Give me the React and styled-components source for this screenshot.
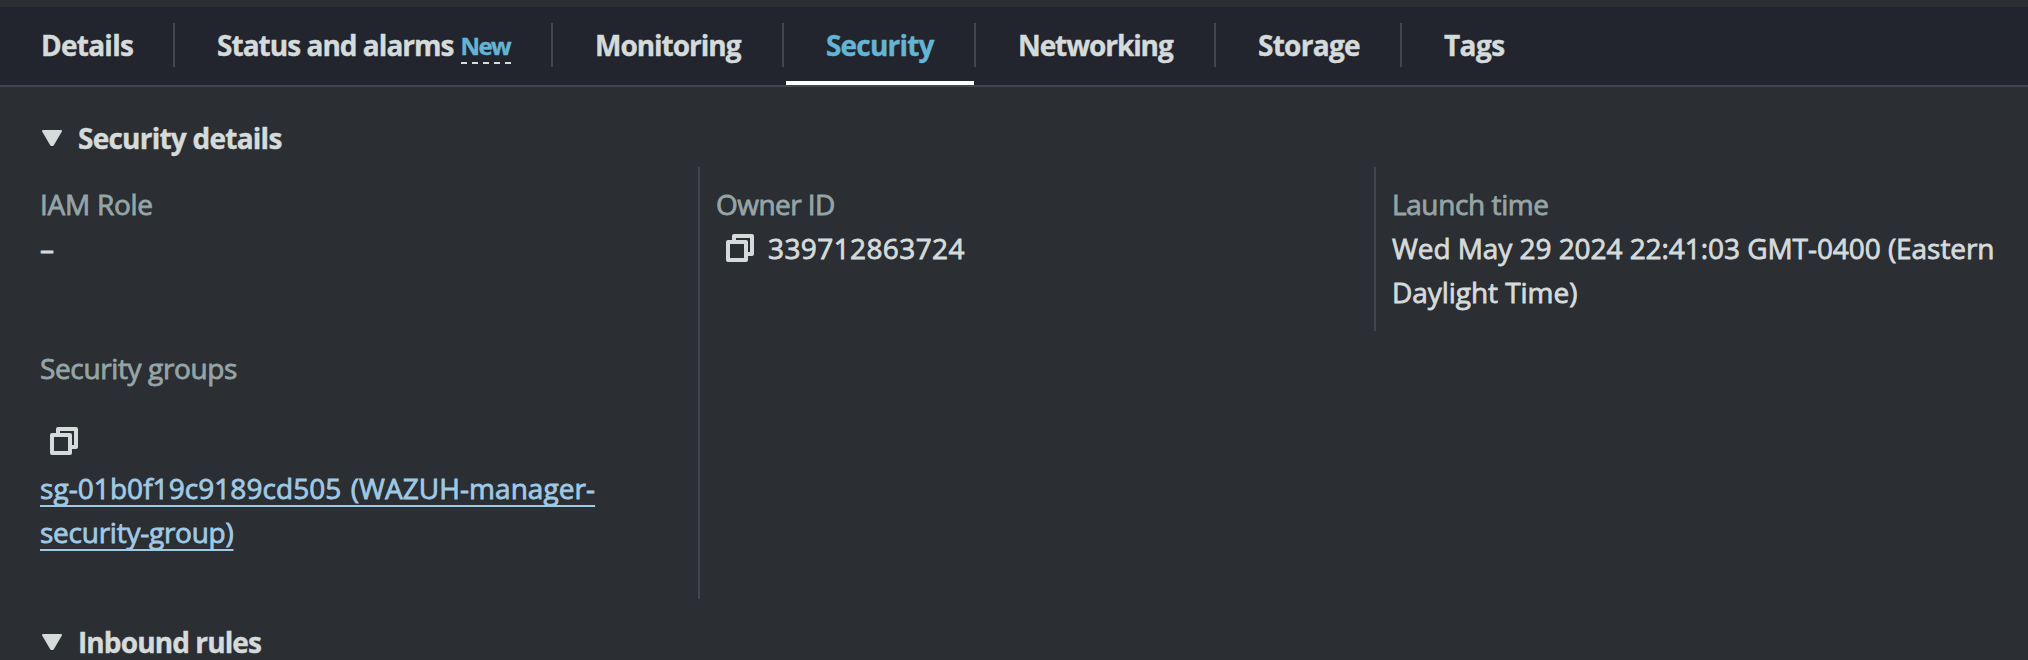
import React from "react";
import styled, { createGlobalStyle } from "styled-components";

const colors = {
  page: "#2b2e33",
  bar: "#22252d",
  line: "#43454f",
  text: "#d5dbdb",
  label: "#95a5a6",
  accent: "#64b4d6",
  link: "#a0c9e4",
};

const GlobalStyle = createGlobalStyle`
  * { box-sizing: border-box; }
  body {
    margin: 0;
    background: ${colors.page};
    color: ${colors.text};
    font: 400 28px/44px "Open Sans", "Noto Sans", sans-serif;
    overflow: hidden;
  }
`;

const Page = styled.div`
  height: 660px;
  padding-top: 7px;
  overflow: hidden;
`;

const TabBar = styled.nav`
  display: flex;
  height: 80px;
  background: ${colors.bar};
  border-bottom: 2px solid ${colors.line};
`;

const TabItem = styled.div`
  display: flex;
  width: ${(p) => p.$width}px;
  height: 78px;
`;

const Tab = styled.a`
  flex: 1;
  display: flex;
  height: 78px;
  padding: 16px 0 0 ${(p) => p.$inset}px;
  border-bottom: 4px solid ${(p) => (p.$active ? "#ffffff" : "transparent")};
  color: ${(p) => (p.$active ? colors.accent : colors.text)};
  font-weight: 700;
  letter-spacing: ${(p) => p.$spacing}px;
  white-space: nowrap;
  -webkit-text-stroke: 0.4px currentColor;
`;

const Divider = styled.span`
  width: 2px;
  height: 44px;
  margin: 16px ${(p) => p.$after || 0}px 0 0;
  background: ${colors.line};
`;

const NewBadge = styled.span`
  width: 50px;
  height: 41px;
  margin-left: 7px;
  color: ${colors.accent};
  font-size: 24px;
  line-height: 46px;
  letter-spacing: -1.6px;
  border-bottom: 2px dashed ${colors.text};
`;

const SectionHeader = styled.h2`
  display: flex;
  align-items: center;
  gap: 16px;
  height: 44px;
  margin: ${(p) => p.$top}px 0 0 42px;
  font-size: 28px;
  line-height: 44px;
  font-weight: 700;
  letter-spacing: ${(p) => p.$spacing}px;
  -webkit-text-stroke: 0.4px currentColor;
`;

const Columns = styled.div`
  display: grid;
  grid-template-columns: 658px 676px 1fr;
  height: 432px;
  margin: 7px 0 0 40px;
`;

const Column = styled.div`
  padding: 15px 0 ${(p) => (p.$compact ? 17 : 0)}px ${(p) => (p.$ruled ? 16 : 0)}px;
  border-left: ${(p) => (p.$ruled ? `2px solid ${colors.line}` : "none")};
  align-self: ${(p) => (p.$compact ? "start" : "stretch")};
  -webkit-text-stroke: 0.8px currentColor;
`;

const Field = styled.div`
  margin-bottom: ${(p) => p.$gap || 0}px;
`;

const Label = styled.div`
  color: ${colors.label};
  letter-spacing: ${(p) => p.$spacing}px;
`;

const Value = styled.div`
  letter-spacing: ${(p) => p.$spacing || 0}px;
  white-space: nowrap;
`;

const CopyValue = styled.div`
  display: flex;
  align-items: center;
  gap: 14px;
  padding-left: 10px;
`;

const CopyRow = styled.div`
  height: 76px;
  padding: 37px 0 0 10px;
  line-height: 0;
`;

const GroupLink = styled.a`
  display: flex;
  flex-direction: column;
  align-items: flex-start;
  color: ${colors.link};
`;

const LinkLine = styled.span`
  letter-spacing: ${(p) => p.$spacing}px;
  word-spacing: ${(p) => p.$wordGap || 0}px;
  white-space: nowrap;
  text-decoration: underline 2px;
  text-underline-offset: 6px;
  text-decoration-skip-ink: none;
`;

const CopyIcon = () => (
  <svg width="28" height="28" viewBox="0 0 28 28" fill="none" stroke={colors.text} strokeWidth="4" strokeLinejoin="round">
    <rect x="2" y="8" width="18" height="18" />
    <path d="M8 6V2H26V20H22" />
  </svg>
);

const Caret = () => (
  <svg width="20" height="16" viewBox="0 0 20 16" fill={colors.text} stroke={colors.text} strokeWidth="2" strokeLinejoin="round">
    <path d="M1 1H19L10.8 15H9.2Z" />
  </svg>
);

const tabs = [
  { name: "Details", width: 175, inset: 41, spacing: -0.75 },
  { name: "Status and alarms", width: 378, inset: 42, spacing: -0.97, isNew: true },
  { name: "Monitoring", width: 233, inset: 42, spacing: -1.02, after: 2 },
  { name: "Security", width: 190, inset: 40, spacing: -0.81, active: true },
  { name: "Networking", width: 240, inset: 42, spacing: -1.1 },
  { name: "Storage", width: 186, inset: 42, spacing: -0.73 },
  { name: "Tags", width: 160, inset: 42, spacing: -0.6, last: true },
];

export default function App() {
  return (
    <>
      <GlobalStyle />
      <Page>
        <TabBar>
          {tabs.map((t) => (
            <TabItem key={t.name} $width={t.width}>
              <Tab $active={t.active} $inset={t.inset} $spacing={t.spacing}>
                {t.name}
                {t.isNew && <NewBadge>New</NewBadge>}
              </Tab>
              {!t.last && <Divider $after={t.after} />}
            </TabItem>
          ))}
        </TabBar>

        <SectionHeader $top={29} $spacing={-0.76}>
          <Caret />
          Security details
        </SectionHeader>

        <Columns>
          <Column>
            <Field $gap={76}>
              <Label $spacing={-0.27}>IAM Role</Label>
              <Value>–</Value>
            </Field>
            <Field>
              <Label $spacing={-0.37}>Security groups</Label>
              <CopyRow>
                <CopyIcon />
              </CopyRow>
              <GroupLink>
                <LinkLine $spacing={0.06} $wordGap={2}>
                  sg-01b0f19c9189cd505 (WAZUH-manager-
                </LinkLine>
                <LinkLine $spacing={-0.25}>security-group)</LinkLine>
              </GroupLink>
            </Field>
          </Column>
          <Column $ruled>
            <Field>
              <Label $spacing={-0.55}>Owner ID</Label>
              <CopyValue>
                <CopyIcon />
                <Value $spacing={0.4}>339712863724</Value>
              </CopyValue>
            </Field>
          </Column>
          <Column $ruled $compact>
            <Field>
              <Label $spacing={-0.4}>Launch time</Label>
              <Value $spacing={-0.06}>Wed May 29 2024 22:41:03 GMT-0400 (Eastern</Value>
              <Value $spacing={-0.05}>Daylight Time)</Value>
            </Field>
          </Column>
        </Columns>

        <SectionHeader $top={21} $spacing={-0.9}>
          <Caret />
          Inbound rules
        </SectionHeader>
      </Page>
    </>
  );
}
